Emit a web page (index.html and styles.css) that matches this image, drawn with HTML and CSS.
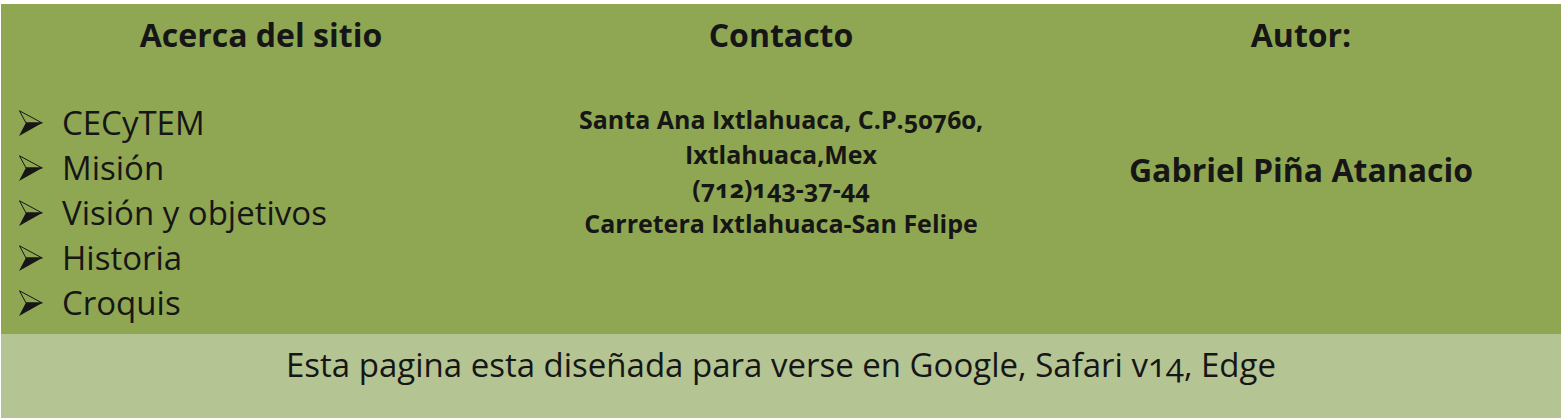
FILE: index.html
```html
<!DOCTYPE html>
<html lang="es">
<head>
<meta charset="utf-8">
<title>Pie de página</title>
<link rel="stylesheet" href="styles.css">
</head>
<body>
<footer class="site-footer">
  <div class="columns">
    <section class="col col-about">
      <h2 class="col-title">Acerca del sitio</h2>
      <ul class="links">
        <li class="link"><svg class="arrow" viewBox="0 0 24 26" aria-hidden="true"><polygon points="0.5,0.8 23.2,13 7,13" fill="none" stroke="#161616" stroke-width="1"/><polygon points="7,12.6 24,12.6 0,26" fill="#161616"/></svg><span>CECyTEM</span></li>
        <li class="link"><svg class="arrow" viewBox="0 0 24 26" aria-hidden="true"><polygon points="0.5,0.8 23.2,13 7,13" fill="none" stroke="#161616" stroke-width="1"/><polygon points="7,12.6 24,12.6 0,26" fill="#161616"/></svg><span>Misión</span></li>
        <li class="link"><svg class="arrow" viewBox="0 0 24 26" aria-hidden="true"><polygon points="0.5,0.8 23.2,13 7,13" fill="none" stroke="#161616" stroke-width="1"/><polygon points="7,12.6 24,12.6 0,26" fill="#161616"/></svg><span>Visión y objetivos</span></li>
        <li class="link"><svg class="arrow" viewBox="0 0 24 26" aria-hidden="true"><polygon points="0.5,0.8 23.2,13 7,13" fill="none" stroke="#161616" stroke-width="1"/><polygon points="7,12.6 24,12.6 0,26" fill="#161616"/></svg><span>Historia</span></li>
        <li class="link"><svg class="arrow" viewBox="0 0 24 26" aria-hidden="true"><polygon points="0.5,0.8 23.2,13 7,13" fill="none" stroke="#161616" stroke-width="1"/><polygon points="7,12.6 24,12.6 0,26" fill="#161616"/></svg><span>Croquis</span></li>
      </ul>
    </section>
    <section class="col col-contact">
      <h2 class="col-title">Contacto</h2>
      <p class="contact">Santa Ana Ixtlahuaca, C.P.50760,<br>Ixtlahuaca,Mex<br>(712)143-37-44<br>Carretera Ixtlahuaca-San Felipe</p>
    </section>
    <section class="col col-author">
      <h2 class="col-title">Autor:</h2>
      <p class="author">Gabriel Piña Atanacio</p>
    </section>
  </div>
  <div class="note">Esta pagina esta diseñada para verse en Google, Safari v14, Edge</div>
</footer>
</body>
</html>
```

FILE: styles.css
```css
html, body {
  background: #ffffff;
}
body {
  margin: 4px 0 0 1px;
  font-family: "Open Sans", Lato, sans-serif;
  font-variant-numeric: oldstyle-nums;
  color: #161616;
}
.site-footer {
  display: flex;
  flex-direction: column;
}
.columns {
  display: grid;
  grid-template-columns: 1fr 1fr 1fr;
  height: 330px;
  background: #8fa752;
}
.col {
  display: flex;
  flex-direction: column;
}
.col-title {
  margin: 0;
  padding-top: 11px;
  font-size: 32px;
  line-height: 40px;
  font-weight: 700;
  text-align: center;
}
.links {
  list-style: none;
  margin: 0;
  padding: 45px 0 0 18px;
}
.link {
  display: flex;
  align-items: center;
  height: 45px;
  font-size: 33px;
  line-height: 45px;
}
.arrow {
  width: 24px;
  height: 26px;
  margin-right: 19px;
  flex: none;
}
.contact {
  margin: 0;
  padding-top: 47px;
  font-size: 25px;
  line-height: 34.7px;
  font-weight: 700;
  text-align: center;
}
.author {
  margin: 0;
  padding-top: 93px;
  font-size: 32px;
  line-height: 44px;
  font-weight: 700;
  text-align: center;
}
.note {
  height: 84px;
  background: #b4c493;
  font-size: 33px;
  line-height: 45px;
  text-align: center;
  padding-top: 8px;
  box-sizing: border-box;
}
```
